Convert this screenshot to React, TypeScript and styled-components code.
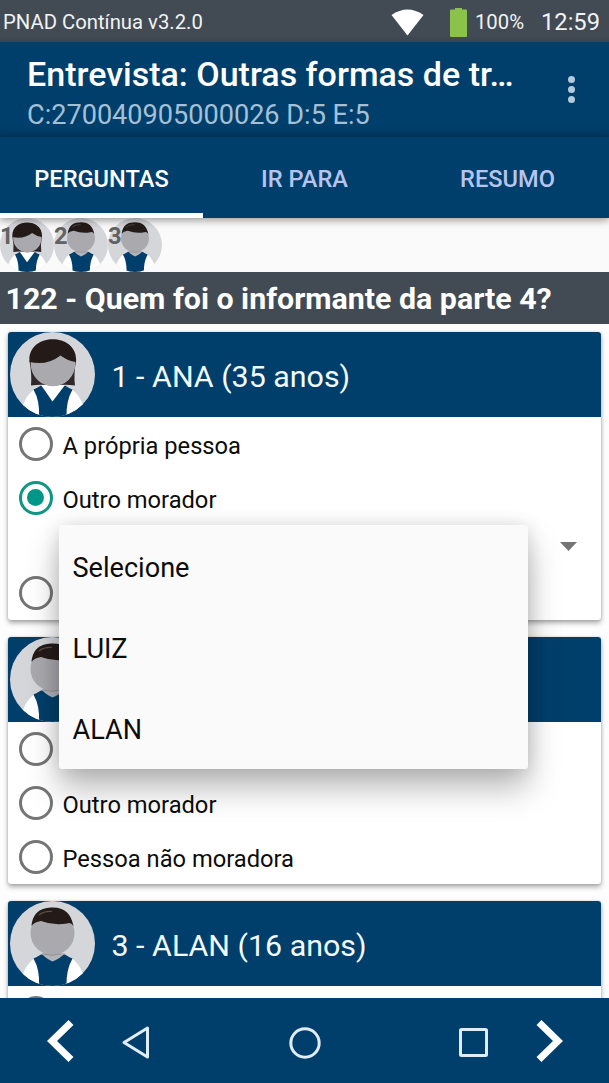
import React from "react";
import styled, { createGlobalStyle } from "styled-components";

const NAVY = "#003f6b";
const SLATE = "#424b53";

const GlobalStyle = createGlobalStyle`
  *, *::before, *::after { box-sizing: border-box; }
  html, body { margin: 0; padding: 0; overflow: hidden; }
  body { font-family: Roboto, "Noto Sans", sans-serif; background: #fdfdfd; }
`;

const Screen = styled.div`
  position: relative;
  display: flex;
  flex-direction: column;
  width: 609px;
  height: 1083px;
  overflow: hidden;
  background: #fdfdfd;
`;

const StatusBar = styled.header`
  display: flex;
  align-items: center;
  flex: 0 0 42px;
  padding: 2px 9px 0 3px;
  background: linear-gradient(${SLATE} 36px, #3a444d 42px);
  color: #f1f3f4;
`;

const StatusText = styled.span<{ $size: number; $ml?: number }>`
  font-size: ${(p) => p.$size}px;
  line-height: 40px;
  margin-left: ${(p) => p.$ml ?? 0}px;
  white-space: nowrap;
`;

const StatusIcons = styled.div`
  display: flex;
  align-items: center;
  margin-left: auto;
`;

const BatteryIcon = styled.svg`
  margin-left: 26px;
`;

const AppBar = styled.div`
  display: flex;
  justify-content: space-between;
  flex: 0 0 95px;
  padding: 12px 27px 0 27px;
  background: linear-gradient(${NAVY} 84px, #003860 95px);
`;

const Title = styled.h1`
  margin: 0;
  padding-bottom: 1px;
  font-size: 34px;
  font-weight: 500;
  line-height: 40px;
  color: #fff;
  white-space: nowrap;
`;

const Subtitle = styled.div`
  font-size: 27.1px;
  line-height: 40px;
  color: #a5c0d6;
  white-space: nowrap;
`;

const OverflowDots = styled.div`
  display: flex;
  flex-direction: column;
  gap: 3px;
  padding: 22px 7px 0 0;
`;

const Dot = styled.i`
  width: 7px;
  height: 7px;
  border-radius: 50%;
  background: #b3cbdd;
`;

const Tabs = styled.nav`
  display: flex;
  flex: 0 0 81px;
  background: ${NAVY};
  box-shadow: 0 2px 8px rgba(0, 0, 0, 0.42);
  z-index: 1;
`;

const Tab = styled.div<{ $active?: boolean }>`
  flex: 1;
  display: flex;
  align-items: center;
  justify-content: center;
  padding-top: 7px;
  border-bottom: 5px solid ${(p) => (p.$active ? "#fff" : "transparent")};
  color: ${(p) => (p.$active ? "#fff" : "#b9c4ee")};
  font-size: 23.6px;
  font-weight: 500;
`;

const PeopleStrip = styled.div`
  display: flex;
  flex: 0 0 54.4px;
  background: #fafafa;
`;

const Person = styled.div`
  position: relative;
  width: 54px;
  height: 54px;
`;

const PersonNumber = styled.b`
  position: absolute;
  left: 0;
  top: 5px;
  font-size: 23.7px;
  line-height: 26px;
  color: #626262;
`;

const Question = styled.h2`
  flex: 0 0 51.6px;
  margin: 0;
  padding: 3px 0 0 5.5px;
  background: ${SLATE};
  color: #fff;
  font-size: 30.35px;
  line-height: 48.6px;
  font-weight: 700;
  white-space: nowrap;
`;

const Content = styled.main`
  flex: 1;
  min-height: 0;
  overflow: hidden;
  display: flex;
  flex-direction: column;
  gap: 17px;
  padding: 8px 8px 0;
  background: #fdfdfd;
`;

const Card = styled.section`
  flex: none;
  border-radius: 3px;
  background: #fff;
  box-shadow: 0 3px 5px rgba(0, 0, 0, 0.32), 0 0 3px rgba(0, 0, 0, 0.16);
`;

const CardHeader = styled.div`
  display: flex;
  align-items: center;
  gap: 16.5px;
  height: 85px;
  padding-left: 2px;
  border-radius: 3px 3px 0 0;
  background: ${NAVY};
`;

const CardTitle = styled.h3`
  margin: 5px 0 0;
  font-size: 30.4px;
  font-weight: 400;
  color: #f4fbff;
  white-space: nowrap;
`;

const RadioRow = styled.div`
  display: flex;
  align-items: center;
  gap: 10px;
  height: 54px;
  padding-left: 10.5px;
  font-size: 23.7px;
  color: #0c0c0c;
  white-space: nowrap;
`;

const RadioMark = styled.span<{ $on?: boolean }>`
  display: flex;
  align-items: center;
  justify-content: center;
  width: 34px;
  height: 34px;
  border: 3.5px solid ${(p) => (p.$on ? "#0d9784" : "#757575")};
  border-radius: 50%;
  &::after {
    content: "";
    width: 17px;
    height: 17px;
    border-radius: 50%;
    background: ${(p) => (p.$on ? "#009688" : "transparent")};
  }
`;

const RadioText = styled.span`
  padding-top: 4px;
`;

const SpinnerRow = styled.div`
  display: flex;
  justify-content: flex-end;
  height: 41px;
  padding: 17px 24px 0 0;
`;

const Dropdown = styled.div`
  position: absolute;
  left: 59px;
  top: 525px;
  width: 469px;
  height: 244px;
  display: flex;
  flex-direction: column;
  border-radius: 3px;
  background: #fafafa;
  box-shadow: 0 19px 32px rgba(0, 0, 0, 0.28), 0 0 18px rgba(0, 0, 0, 0.12);
  z-index: 2;
`;

const Option = styled.div`
  flex: 1;
  display: flex;
  align-items: center;
  padding: 4px 0 0 13.5px;
  font-size: 27.1px;
  color: #0c0c0c;
`;

const BottomBar = styled.footer`
  display: grid;
  grid-template-columns: 119px 33px 1fr 33px 119px;
  align-items: center;
  justify-items: center;
  flex: 0 0 85px;
  background: ${NAVY};
`;

const Arrow = styled.svg<{ $shift: number }>`
  margin-left: ${(p) => p.$shift}px;
`;

const NavIcon = styled.svg`
  margin-top: 4px;
`;

const Avatar = ({ kind, size }: { kind: "woman" | "man"; size: number }) => {
  const clip = React.useId();
  return (
    <svg width={size} height={size} viewBox="0 0 85 85">
      <clipPath id={clip}>
        <circle cx="42.5" cy="42.5" r="42.5" />
      </clipPath>
      <g clipPath={`url(#${clip})`}>
        <rect width="85" height="85" fill="#d5d6da" />
        <path d="M25 57 Q17 62 13 73 V85 H31 Q32 68 25 57Z" fill="#fff" />
        <path d="M61 57 Q69 62 73 73 V85 H54 Q54 68 61 57Z" fill="#fff" />
        <path d="M23.500 57.500 Q27 56 31 53.500 H55 Q58.500 56 62.500 57.500 Q56 69 56.500 85 H29 Q30 69 23.500 57.500Z" fill={NAVY} />
        {kind === "woman" ? (
          <>
            <path d="M31 53 L42.500 69.500 L55 53Z" fill="#fff" />
            <path d="M19.500 29 Q22 43 21 53.500 Q33 52 43 54 Q53 52 65 53.500 Q63.500 43 66 29Z" fill="#30272a" />
            <circle cx="43" cy="32" r="22.300" fill="#a9a9ae" />
            <path d="M19.500 30 C16.500 -0.500 69 -0.500 66 30 Q58 29 50.500 23.500 Q37 34 19.500 30Z" fill="#241b19" />
          </>
        ) : (
          <>
            <path d="M31 52 H55 Q51 57 42.500 60.500 Q35 57 31 52Z" fill="#b4b4b8" />
            <circle cx="42.500" cy="32" r="22" fill="#a9a9ae" />
            <path d="M33 53 Q42 55.500 51 53" stroke="#929297" fill="none" />
            <path d="M21.500 25 C23 11 31 6.500 43 6.500 C55 6.500 61 13 63.500 25 Q61 21 57 22.500 Q44 25 31 20 Q24 21 21.500 25Z" fill="#241b19" />
            <path d="M29 14 Q34 10 42 10.500" stroke="#5a504c" strokeWidth="1.200" fill="none" />
          </>
        )}
      </g>
    </svg>
  );
};

const Radio = ({ label, on }: { label?: string; on?: boolean }) => (
  <RadioRow>
    <RadioMark $on={on} />
    {label && <RadioText>{label}</RadioText>}
  </RadioRow>
);

const people: Array<"woman" | "man"> = ["woman", "man", "man"];

export default function App() {
  return (
    <>
      <GlobalStyle />
      <Screen>
        <StatusBar>
          <StatusText $size={20.3}>PNAD Contínua v3.2.0</StatusText>
          <StatusIcons>
            <svg width="33" height="27" viewBox="0 0 33 27">
              <path d="M0.500 6 Q16.500 -5 32.500 6 L16.500 26.500Z" fill="#fff" />
            </svg>
            <BatteryIcon width="17" height="29" viewBox="0 0 17 29">
              <path d="M5 0H12V1.500H16Q17 1.500 17 2.500V28Q17 29 16 29H1Q0 29 0 28V2.500Q0 1.500 1 1.500H5Z" fill="#8bc34a" />
            </BatteryIcon>
            <StatusText $size={20.3} $ml={8}>100%</StatusText>
            <StatusText $size={23.7} $ml={17}>12:59</StatusText>
          </StatusIcons>
        </StatusBar>
        <AppBar>
          <div>
            <Title>Entrevista: Outras formas de tr…</Title>
            <Subtitle>C:270040905000026 D:5 E:5</Subtitle>
          </div>
          <OverflowDots>
            <Dot />
            <Dot />
            <Dot />
          </OverflowDots>
        </AppBar>
        <Tabs>
          <Tab $active>PERGUNTAS</Tab>
          <Tab>IR PARA</Tab>
          <Tab>RESUMO</Tab>
        </Tabs>
        <PeopleStrip>
          {people.map((kind, i) => (
            <Person key={i}>
              <Avatar kind={kind} size={54} />
              <PersonNumber>{i + 1}</PersonNumber>
            </Person>
          ))}
        </PeopleStrip>
        <Question>122 - Quem foi o informante da parte 4?</Question>
        <Content>
          <Card>
            <CardHeader>
              <Avatar kind="woman" size={85} />
              <CardTitle>1 - ANA (35 anos)</CardTitle>
            </CardHeader>
            <Radio label="A própria pessoa" />
            <Radio label="Outro morador" on />
            <SpinnerRow>
              <svg width="17" height="9" viewBox="0 0 17 9">
                <path d="M0 0H17L8.500 9Z" fill="#757575" />
              </svg>
            </SpinnerRow>
            <Radio />
          </Card>
          <Card>
            <CardHeader>
              <Avatar kind="man" size={85} />
            </CardHeader>
            <Radio />
            <Radio label="Outro morador" />
            <Radio label="Pessoa não moradora" />
          </Card>
          <Card>
            <CardHeader>
              <Avatar kind="man" size={85} />
              <CardTitle>3 - ALAN (16 anos)</CardTitle>
            </CardHeader>
            <Radio />
          </Card>
        </Content>
        <BottomBar>
          <Arrow $shift={2} width="28" height="44" viewBox="0 0 28 44">
            <path d="M24 3.500 L5 22 L24 40.500" stroke="#fff" strokeWidth="7" fill="none" />
          </Arrow>
          <NavIcon width="28" height="33" viewBox="0 0 28 33">
            <path d="M25.500 2 V31 L2 16.500Z" stroke="#e1edf6" strokeWidth="3" strokeLinejoin="round" fill="none" />
          </NavIcon>
          <NavIcon width="32" height="32" viewBox="0 0 32 32">
            <circle cx="16" cy="16" r="14.200" stroke="#e1edf6" strokeWidth="3" fill="none" />
          </NavIcon>
          <NavIcon width="29" height="29" viewBox="0 0 29 29">
            <rect x="1.500" y="1.500" width="26" height="26" rx="1" stroke="#e1edf6" strokeWidth="3" fill="none" />
          </NavIcon>
          <Arrow $shift={-2} width="28" height="44" viewBox="0 0 28 44">
            <path d="M4 3.500 L23 22 L4 40.500" stroke="#fff" strokeWidth="7" fill="none" />
          </Arrow>
        </BottomBar>
        <Dropdown>
          <Option>Selecione</Option>
          <Option>LUIZ</Option>
          <Option>ALAN</Option>
        </Dropdown>
      </Screen>
    </>
  );
}
